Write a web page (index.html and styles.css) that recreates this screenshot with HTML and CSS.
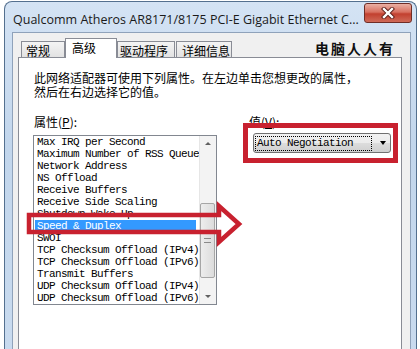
FILE: index.html
```html
<!DOCTYPE html>
<html lang="zh-CN">
<head>
  <meta charset="UTF-8" />
  <title>Qualcomm Atheros AR8171/8175 PCI-E Gigabit Ethernet Controller</title>
  <link rel="stylesheet" href="styles.css">
</head>
<body>
  <div class="window">
    <div class="titlebar">
      <span class="title">Qualcomm Atheros AR8171/8175 PCI-E Gigabit Ethernet C...</span>
      <button class="close" type="button">
        <svg width="14" height="12" viewBox="0 0 14 12">
          <path d="M3 2 L11 10 M11 2 L3 10" stroke="#5b1d17" stroke-width="4.2" stroke-linecap="square" />
          <path d="M3 2 L11 10 M11 2 L3 10" stroke="#fff" stroke-width="2.4" stroke-linecap="square" />
        </svg>
      </button>
    </div>

    <div class="client">
      <div class="tabs">
        <div class="tab tab-general">常规</div>
        <div class="tab tab-advanced active">高级</div>
        <div class="tab tab-driver">驱动程序</div>
        <div class="tab tab-details">详细信息</div>
        <div class="mark">电脑人人有</div>
      </div>

      <div class="panel">
        <p class="intro">此网络适配器可使用下列属性。在左边单击您想更改的属性，<br>然后在右边选择它的值。</p>

        <div class="props">
          <div class="prop-list">
            <div class="label">属性(<u>P</u>):</div>
            <div class="listbox">
              <ul class="items">
                <li>Max IRQ per Second</li>
                <li>Maximum Number of RSS Queue</li>
                <li>Network Address</li>
                <li>NS Offload</li>
                <li>Receive Buffers</li>
                <li>Receive Side Scaling</li>
                <li>Shutdown Wake Up</li>
                <li class="selected">Speed &amp; Duplex</li>
                <li>SWOI</li>
                <li>TCP Checksum Offload (IPv4)</li>
                <li>TCP Checksum Offload (IPv6)</li>
                <li>Transmit Buffers</li>
                <li>UDP Checksum Offload (IPv4)</li>
                <li>UDP Checksum Offload (IPv6)</li>
              </ul>
              <div class="scrollbar">
                <div class="scroll-btn up"></div>
                <div class="scroll-track">
                  <div class="thumb"><span class="grip"></span></div>
                </div>
                <div class="scroll-btn down"></div>
              </div>
            </div>
          </div>

          <div class="prop-value">
            <div class="label">值(<u>V</u>):</div>
            <div class="combo">
              <span class="combo-text">Auto Negotiation</span>
              <span class="combo-arrow"></span>
            </div>
          </div>
        </div>
      </div>
    </div>
  </div>

  <!-- red annotation marks drawn over the dialog -->
  <svg class="marks" width="420" height="349" viewBox="0 0 420 349">
    <polygon points="29,215 219,215 219,206 239,224 219,242 219,232 29,232"
             fill="none" stroke="#c8212f" stroke-width="4.5" />
    <rect x="245.5" y="125.5" width="150" height="35" fill="none" stroke="#c8212f" stroke-width="5" />
  </svg>
</body>
</html>
```

FILE: styles.css
```css
* {
  box-sizing: border-box;
}

body {
  margin: 0;
  width: 420px;
  height: 349px;
  overflow: hidden;
  position: relative;
  background: #fff;
  font-family: "Noto Sans CJK SC", "Noto Sans", sans-serif;
  font-size: 12px;
  color: #000;
}

.window {
  margin: 1px 0 0 4px;
  width: 413px;
  height: 360px;
  padding: 0 5px 0 7px;
  border: 1px solid #54708f;
  border-bottom: none;
  border-radius: 8px 8px 0 0;
  background: linear-gradient(to bottom, #d4e3f4, #c2d6ec 40%, #c9dbef);
}

.titlebar {
  display: flex;
  align-items: flex-start;
  height: 30px;
}

.title {
  flex: 1;
  margin: 10px 0 0 1px;
  font-family: "Open Sans", "Noto Sans", sans-serif;
  font-size: 12.5px;
  line-height: 16px;
  color: #1a1a1a;
  white-space: nowrap;
}

.close {
  display: flex;
  align-items: center;
  justify-content: center;
  width: 48px;
  height: 20px;
  margin: 1px -1px 0 0;
  padding: 0;
  border: 1px solid #6f2d26;
  border-radius: 3px;
  background: linear-gradient(to bottom, #eab0a4, #d87060 45%, #c2402f 55%, #cf6a58);
}

.client {
  height: 330px;
  padding: 5px 8px 0 5px;
  border: 1px solid #8fa2ba;
  border-bottom: none;
  background: #f0f0f0;
}

.tabs {
  position: relative;
  z-index: 1;
  display: flex;
  align-items: flex-end;
  height: 20px;
  margin-bottom: -1px;
  padding-left: 3px;
}

.tab {
  height: 16px;
  margin-bottom: 1px;
  border: 1px solid #898c95;
  border-bottom: none;
  background: linear-gradient(to bottom, #f4f4f4, #e2e2e2);
  line-height: 17px;
  white-space: nowrap;
}

.tab-general {
  padding: 0 14px 0 4px;
}

.tab-advanced {
  padding: 0 20px 0 6px;
}

.tab-driver {
  padding: 0 6px 0 2px;
}

.tab-details {
  margin-left: 1px;
  padding: 0 1px 0 5px;
}

.tab.active {
  height: 20px;
  margin-bottom: 0;
  background: #fff;
  line-height: 17px;
}

.mark {
  margin: 0 7px 1px auto;
  font-size: 14px;
  font-weight: 700;
  letter-spacing: 2px;
  line-height: 18px;
  color: #111;
}

.panel {
  height: 300px;
  padding: 13px 0 0 15px;
  border: 1px solid #898c95;
  background: #fff;
}

.intro {
  margin: 0;
  line-height: 14px;
}

.props {
  display: flex;
  margin-top: 16px;
}

.label {
  line-height: 14px;
}

.prop-list {
  width: 184px;
}

.listbox {
  display: flex;
  width: 184px;
  height: 170px;
  margin: 6px 0 0 -1px;
  border: 1px solid #828790;
}

.items {
  flex: 1;
  margin: 0;
  padding: 0;
  list-style: none;
  font-family: "Liberation Mono", monospace;
  font-size: 11px;
  letter-spacing: -0.6px;
}

.items li {
  height: 12px;
  padding-left: 3px;
  line-height: 12px;
  white-space: nowrap;
}

.items li.selected {
  margin: 0 3px 0 1px;
  padding-left: 2px;
  background: #3399ff;
  color: #fff;
}

.scrollbar {
  display: flex;
  flex-direction: column;
  width: 17px;
  background: #f3f3f3;
  border-left: 1px solid #e6e6e6;
}

.scroll-btn {
  position: relative;
  height: 17px;
}

.scroll-btn::after {
  content: "";
  position: absolute;
  left: 5px;
  border-left: 3px solid transparent;
  border-right: 3px solid transparent;
}

.scroll-btn.up::after {
  top: 6px;
  border-bottom: 3px solid #606060;
}

.scroll-btn.down::after {
  top: 8px;
  border-top: 3px solid #606060;
}

.scroll-track {
  flex: 1;
}

.thumb {
  display: flex;
  align-items: center;
  justify-content: center;
  height: 75px;
  margin: 50px 1px 0 0;
  border: 1px solid #a6a6a6;
  border-radius: 2px;
  background: linear-gradient(to right, #ededed, #dcdcdc);
}

.grip {
  width: 7px;
  height: 5px;
  border-top: 1px solid #8a8a8a;
  border-bottom: 1px solid #8a8a8a;
}

.prop-value {
  margin-left: 31px;
}

.combo {
  display: flex;
  align-items: center;
  width: 138px;
  height: 20px;
  margin: 4px 0 0 4px;
  padding: 0 1px;
  border: 1px solid #707070;
  border-radius: 3px;
  background: linear-gradient(to bottom, #f2f2f2, #ebebeb 50%, #dddddd 50%, #cfcfcf);
}

.combo-text {
  width: 117px;
  height: 15px;
  padding-left: 1px;
  border: 1px dotted #000;
  font-family: "Liberation Mono", monospace;
  font-size: 11px;
  letter-spacing: -0.6px;
  line-height: 13px;
}

.combo-arrow {
  margin-left: 8px;
  border-left: 3.5px solid transparent;
  border-right: 3.5px solid transparent;
  border-top: 4px solid #000;
}

.marks {
  position: absolute;
  top: 0;
  left: 0;
  pointer-events: none;
}
```
